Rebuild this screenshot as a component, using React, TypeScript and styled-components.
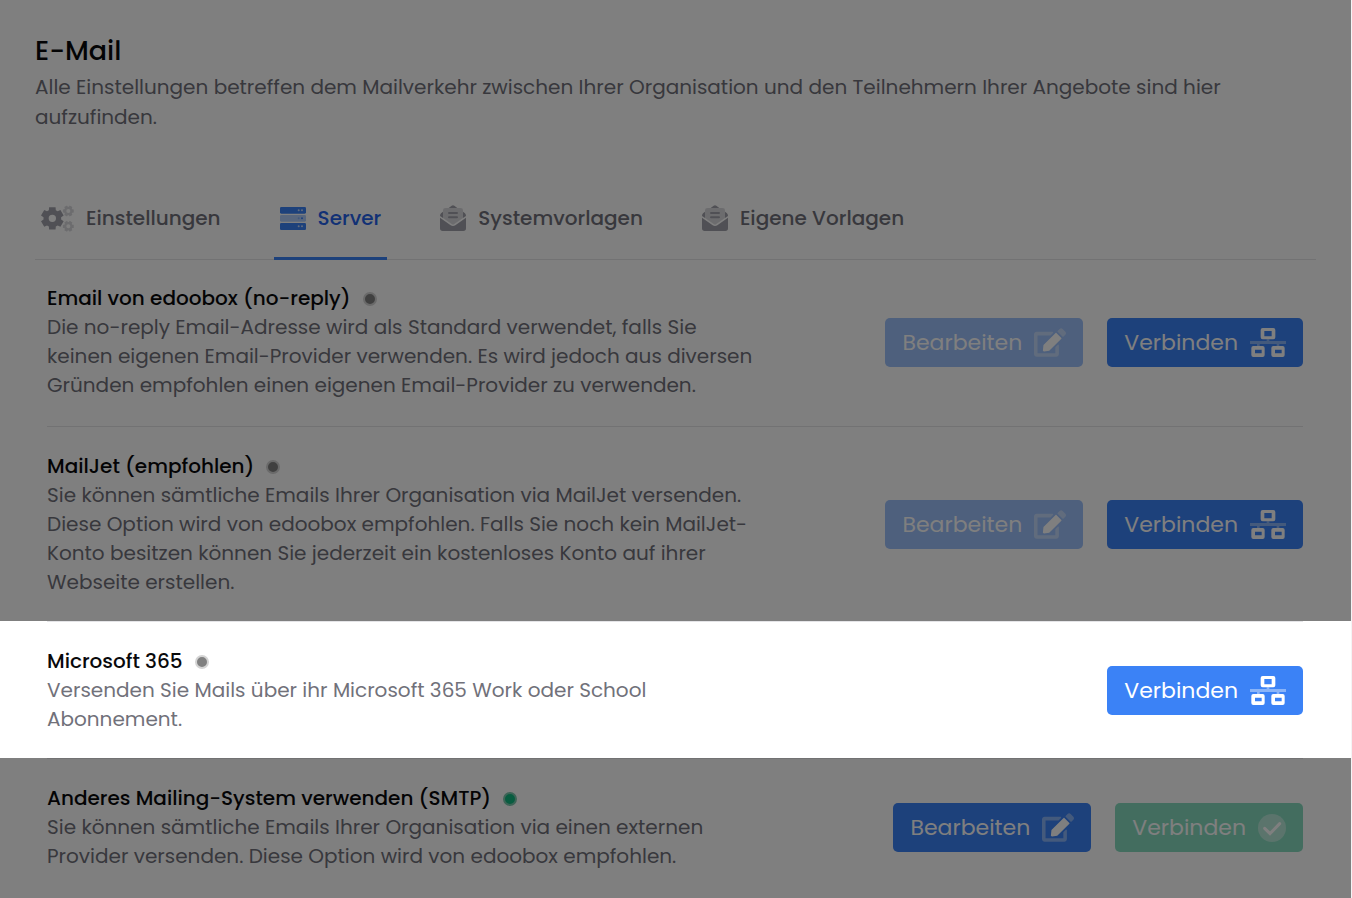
import React from "react";
import styled, { createGlobalStyle, css } from "styled-components";

const GlobalStyle = createGlobalStyle`
  *, *::before, *::after { box-sizing: border-box; }
  body {
    margin: 0;
    background: #ffffff;
    color: #09090b;
    font-family: Poppins, Inter, "Open Sans", sans-serif;
    font-size: 20px;
    line-height: 29px;
  }
  h1, h2, p { margin: 0; font-weight: 400; }
  button { font: inherit; cursor: pointer; }
`;

const Page = styled.main`
  min-height: 100vh;
  overflow: hidden;
  border-right: 1px solid #f4f4f5;
`;

const Header = styled.header`
  padding: 30px 35px 0;
`;

const Title = styled.h1`
  font-size: 27px;
  line-height: 42px;
  font-weight: 500;
`;

const Lead = styled.p`
  max-width: 1240px;
  color: #71717a;
  line-height: 30px;
`;

const Tabs = styled.nav`
  display: flex;
  gap: 47px;
  height: 82px;
  margin: 46px 35px 0;
  border-bottom: 1px solid #e4e4e7;
`;

const Tab = styled.button<{ $active?: boolean }>`
  display: flex;
  align-items: center;
  gap: 12px;
  height: 82px;
  padding: 0 6px;
  border: 0;
  border-top: 1px solid transparent;
  border-bottom: 3px solid ${(p) => (p.$active ? "#3b82f6" : "transparent")};
  background: none;
  color: ${(p) => (p.$active ? "#2563eb" : "#71717a")};
  font-weight: 500;
`;

const Icon = styled.svg`
  display: block;
  flex: none;
  fill: currentColor;
`;

const TabIcon = styled(Icon)<{ $active?: boolean }>`
  color: ${(p) => (p.$active ? "#3b82f6" : "#a1a1aa")};
`;

const Providers = styled.section`
  display: flex;
  flex-direction: column;
  padding-top: 1px;
`;

const Provider = styled.article<{ $highlighted?: boolean }>`
  padding: 0 48px 0 47px;

  ${(p) =>
    p.$highlighted &&
    css`
      position: relative;
      z-index: 1;

      &::after {
        content: "";
        position: absolute;
        inset: 0;
        box-shadow: 0 0 0 200vmax rgba(0, 0, 0, 0.5);
        pointer-events: none;
      }
    `}
`;

const ProviderBody = styled.div`
  display: flex;
  align-items: center;
  justify-content: space-between;
  gap: 24px;
  padding: 25px 0 24px;
  border-top: 1px solid #e4e4e7;

  ${Provider}:first-child & {
    padding: 23px 0 26px;
    border-top: 0;
  }
`;

const Info = styled.div`
  flex: 0 1 712px;
`;

const Name = styled.h2`
  display: flex;
  align-items: center;
  gap: 12px;
  font-size: 20px;
  font-weight: 500;
`;

const Status = styled.span<{ $online?: boolean }>`
  width: 14px;
  height: 14px;
  border: 2px solid ${(p) => (p.$online ? "#7cc9ae" : "#d4d4d4")};
  border-radius: 50%;
  background: ${(p) => (p.$online ? "#10b981" : "#808080")};
`;

const Description = styled.p`
  color: #71717a;
`;

const Actions = styled.div`
  display: flex;
  flex: none;
  gap: 24px;
`;

const Action = styled.button<{ $tone?: "blue" | "green" }>`
  display: flex;
  align-items: center;
  gap: 12px;
  height: 49px;
  padding: 0 17px;
  border: 0;
  border-radius: 5px;
  background: ${(p) => (p.$tone === "green" ? "#10b981" : "#3b82f6")};
  color: #ffffff;
  font-size: 22px;

  &:disabled {
    opacity: 0.5;
    cursor: default;
  }
`;

function gearPath(cx: number, cy: number, r: number, hole: number, turn: number) {
  const body = r * 0.76;
  const points: string[] = [];
  for (let i = 0; i < 6; i++) {
    const mid = turn + (i * Math.PI) / 3;
    const corners: [number, number][] = [
      [body, -0.4],
      [r, -0.28],
      [r, 0.28],
      [body, 0.4],
    ];
    corners.forEach(([radius, offset]) => {
      const x = cx + radius * Math.cos(mid + offset);
      const y = cy + radius * Math.sin(mid + offset);
      points.push(`${x.toFixed(1)} ${y.toFixed(1)}`);
    });
  }
  const ring = `M${cx - hole} ${cy}a${hole} ${hole} 0 1 0 ${hole * 2} 0a${hole} ${hole} 0 1 0 ${-hole * 2} 0z`;
  return `M${points.join("L")}z${ring}`;
}

const GearsIcon = () => (
  <TabIcon width="33" height="27" viewBox="0 0 99 81" fillRule="evenodd" aria-hidden>
    <path d={gearPath(34, 40, 35, 11, Math.PI / 2)} />
    <path opacity="0.4" d={gearPath(82, 18, 17, 6, 0)} />
    <path opacity="0.4" d={gearPath(82, 64, 17, 6, 0)} />
  </TabIcon>
);

const ServerIcon = () => (
  <TabIcon $active width="26" height="26" viewBox="0 0 78 78" aria-hidden>
    <rect width="78" height="20" y="6" rx="4" />
    <rect width="78" height="20" y="30" rx="4" opacity="0.4" />
    <rect width="78" height="21" y="54" rx="4" />
    <g fill="#ffffff" opacity="0.7">
      <circle cx="56" cy="16" r="3" />
      <circle cx="66" cy="16" r="3" />
      <circle cx="56" cy="64" r="3" />
      <circle cx="66" cy="64" r="3" />
    </g>
    <circle cx="56" cy="40" r="3" opacity="0.4" />
    <circle cx="66" cy="40" r="3" />
  </TabIcon>
);

const LetterIcon = () => (
  <TabIcon width="26" height="26" viewBox="0 0 78 78" aria-hidden>
    <path d="M26 9L35 2q4-3 8 0l9 7zM9 20v19L0 33q0-5 3-8zM69 20v19l9-6q0-5-3-8z" />
    <path opacity="0.4" d="M16 9h46q7 0 7 7v23L43 57q-4 3-8 0L9 39V16q0-7 7-7z" />
    <path d="M27 21h24a3 3 0 0 1 0 6H27a3 3 0 0 1 0-6zM27 34h24a3 3 0 0 1 0 6H27a3 3 0 0 1 0-6z" />
    <path d="M0 38l32 23q7 4 14 0l32-23v32q0 8-8 8H8q-8 0-8-8z" />
  </TabIcon>
);

const NetworkIcon = () => (
  <Icon width="36" height="29" viewBox="0 0 108 87" fillRule="evenodd" aria-hidden>
    <path opacity="0.4" d="M0 39h50v-5h8v5h50v9H88v6h-8v-6H29v6h-8v-6H0z" />
    <path d="M38 0h32q6 0 6 6v22q0 6-6 6H38q-6 0-6-6V6q0-6 6-6zM43 9v16h22V9z" />
    <path d="M10 54h28q6 0 6 6v21q0 6-6 6H10q-6 0-6-6V60q0-6 6-6zM15 65v11h20V65z" />
    <path d="M70 54h28q6 0 6 6v21q0 6-6 6H70q-6 0-6-6V60q0-6 6-6zM75 65v11h20V65z" />
  </Icon>
);

const EditIcon = () => (
  <Icon width="32" height="29" viewBox="0 0 576 512" aria-hidden>
    <path d="M402.6 83.2l90.2 90.2c3.8 3.8 3.8 10 0 13.8L274.4 405.6l-92.8 10.3c-12.4 1.4-22.9-9.1-21.5-21.5l10.3-92.8L388.8 83.2c3.8-3.8 10-3.8 13.8 0z" />
    <path
      opacity="0.4"
      d="M564.6 60.3l-48.8-48.8c-15.2-15.2-39.9-15.2-55.2 0l-35.4 35.4c-3.8 3.8-3.8 10 0 13.8l90.2 90.2c3.8 3.8 10 3.8 13.8 0l35.4-35.4c15.2-15.3 15.2-40 0-55.2zM384 346.2V448H64V128h229.8c3.2 0 6.2-1.3 8.5-3.5l40-40c7.6-7.6 2.2-20.5-8.5-20.5H48C21.5 64 0 85.5 0 112v352c0 26.5 21.5 48 48 48h352c26.5 0 48-21.5 48-48V306.2c0-10.7-12.9-16-20.5-8.5l-40 40c-2.2 2.3-3.5 5.3-3.5 8.5z"
    />
  </Icon>
);

const CheckIcon = () => (
  <Icon width="28" height="28" viewBox="0 0 84 84" aria-hidden>
    <circle cx="42" cy="42" r="42" opacity="0.4" />
    <path d="M20 43L36 59L65 29" fill="none" stroke="currentColor" strokeWidth="9" strokeLinecap="round" />
  </Icon>
);

const EditButton = ({ disabled }: { disabled?: boolean }) => (
  <Action type="button" disabled={disabled}>
    Bearbeiten
    <EditIcon />
  </Action>
);

const ConnectButton = () => (
  <Action type="button">
    Verbinden
    <NetworkIcon />
  </Action>
);

interface RowProps {
  name: string;
  text: React.ReactNode;
  online?: boolean;
  highlighted?: boolean;
  children: React.ReactNode;
}

const ProviderRow = ({ name, text, online, highlighted, children }: RowProps) => (
  <Provider $highlighted={highlighted}>
    <ProviderBody>
      <Info>
        <Name>
          {name}
          <Status $online={online} />
        </Name>
        <Description>{text}</Description>
      </Info>
      <Actions>{children}</Actions>
    </ProviderBody>
  </Provider>
);

export default function App() {
  return (
    <>
      <GlobalStyle />
      <Page>
        <Header>
          <Title>E-Mail</Title>
          <Lead>
            Alle Einstellungen betreffen dem Mailverkehr zwischen Ihrer Organisation und den Teilnehmern Ihrer
            Angebote sind hier aufzufinden.
          </Lead>
        </Header>

        <Tabs aria-label="E-Mail">
          <Tab type="button">
            <GearsIcon />
            Einstellungen
          </Tab>
          <Tab type="button" $active aria-current="page">
            <ServerIcon />
            Server
          </Tab>
          <Tab type="button">
            <LetterIcon />
            Systemvorlagen
          </Tab>
          <Tab type="button">
            <LetterIcon />
            Eigene Vorlagen
          </Tab>
        </Tabs>

        <Providers>
          <ProviderRow
            name="Email von edoobox (no-reply)"
            text="Die no-reply Email-Adresse wird als Standard verwendet, falls Sie keinen eigenen Email-Provider verwenden. Es wird jedoch aus diversen Gründen empfohlen einen eigenen Email-Provider zu verwenden."
          >
            <EditButton disabled />
            <ConnectButton />
          </ProviderRow>
          <ProviderRow
            name="MailJet (empfohlen)"
            text="Sie können sämtliche Emails Ihrer Organisation via MailJet versenden. Diese Option wird von edoobox empfohlen. Falls Sie noch kein MailJet-Konto besitzen können Sie jederzeit ein kostenloses Konto auf ihrer Webseite erstellen."
          >
            <EditButton disabled />
            <ConnectButton />
          </ProviderRow>
          <ProviderRow
            highlighted
            name="Microsoft 365"
            text="Versenden Sie Mails über ihr Microsoft 365 Work oder School Abonnement."
          >
            <ConnectButton />
          </ProviderRow>
          <ProviderRow
            online
            name="Anderes Mailing-System verwenden (SMTP)"
            text="Sie können sämtliche Emails Ihrer Organisation via einen externen Provider versenden. Diese Option wird von edoobox empfohlen."
          >
            <EditButton />
            <Action type="button" $tone="green" disabled>
              Verbinden
              <CheckIcon />
            </Action>
          </ProviderRow>
        </Providers>
      </Page>
    </>
  );
}
